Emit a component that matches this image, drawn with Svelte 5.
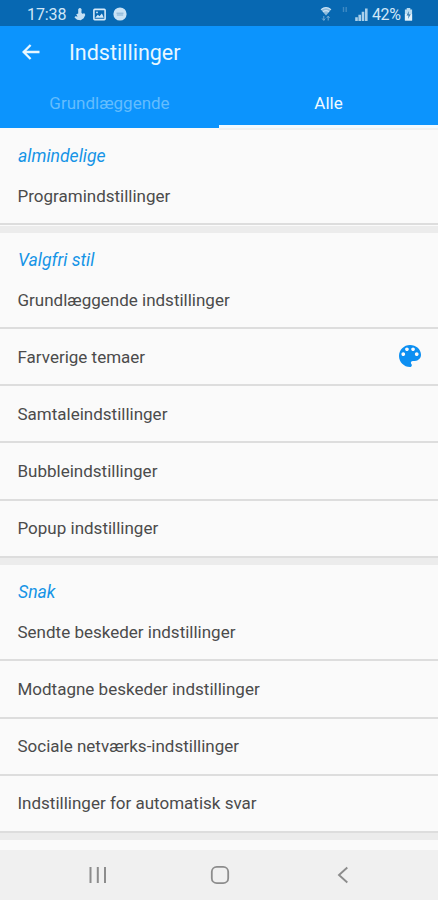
<script>
  const sections = [
    { title: 'almindelige', rows: [{ label: 'Programindstillinger' }] },
    {
      title: 'Valgfri stil',
      rows: [
        { label: 'Grundlæggende indstillinger' },
        { label: 'Farverige temaer', palette: true },
        { label: 'Samtaleindstillinger' },
        { label: 'Bubbleindstillinger' },
        { label: 'Popup indstillinger' }
      ]
    },
    {
      title: 'Snak',
      rows: [
        { label: 'Sendte beskeder indstillinger' },
        { label: 'Modtagne beskeder indstillinger' },
        { label: 'Sociale netværks-indstillinger' },
        { label: 'Indstillinger for automatisk svar' }
      ]
    }
  ];
</script>

<div class="screen">
  <div class="status">
    <span class="time">17:38</span>
    <svg class="s1" width="12" height="14" viewBox="0 0 12 14"><path d="M4.2 2.2Q6-.2 7.6 2.2L7.4 5.5l.8 1.2 2.2-.5.9 1.8-1.6 3.3-3 1.9-3.6-.5L.5 10.5l.7-1.3 2.4.3-1.4-2.3 2-.8z" fill="#c5e0f4" /></svg>
    <svg class="s2" width="13" height="13" viewBox="0 0 13 13"><rect x=".9" y="1.4" width="11.2" height="10.2" rx=".8" fill="none" stroke="#d5eafa" stroke-width="1.6" /><path d="M2.2 9.8 4.8 6.8 6.5 8.2 8.9 5.6l1.9 4.2z" fill="#d5eafa" /><circle cx="4" cy="4.4" r=".9" fill="#d5eafa" /></svg>
    <svg class="s3" width="14" height="14" viewBox="0 0 14 14"><circle cx="7" cy="7" r="6.6" fill="#c9e2f5" /><path d="M3.5 6.2h7M3.8 8h6.4" stroke="#82afd2" stroke-width="1" /></svg>
    <span class="grow"></span>
    <svg class="wifi" width="12" height="16" viewBox="0 0 12 16"><path d="M.8 3.6Q6-.8 11.2 3.6L6 9.5z" fill="#8fbbdc" /><path d="M1 3.6Q6-.4 11 3.6M3 5.7q3-2 6 0" fill="none" stroke="#c9e2f5" stroke-width="1.2" /><path d="M3.8 10v4M2.2 12.5l1.6 2 1.4-2M8.2 14.5v-4M6.8 12l1.4-2 1.4 2" fill="none" stroke="#6fa7d2" stroke-width="1" /></svg>
    <svg class="data" width="6" height="6" viewBox="0 0 6 6"><path d="M1.5 0v5M4.2 0v5" stroke="#3e89c3" stroke-width="1.4" /></svg>
    <svg class="signal" width="13" height="13" viewBox="0 0 13 13"><path d="M1.5 9.3V13M4.7 6.7V13M8 3.8V13M11.3.5V13" stroke="#a9cfea" stroke-width="2.6" /></svg>
    <span class="percent">42%</span>
    <svg class="battery" width="9" height="14" viewBox="0 0 9 14"><path d="M2.7 1h3.6v1.5h1.8v11H.9v-11h1.8z" fill="#badbf0" /><path d="M.9 7h7.2v6.5H.9z" fill="#e2f1fb" /><path d="M5 4 2.5 8.5h2L4 12l2.8-4.8H4.7z" fill="#3c7eb2" /></svg>
  </div>

  <header>
    <div class="toolbar">
      <svg width="18" height="16" viewBox="0 0 18 16"><path d="M17.5 8H1.8M8.6 1 1.6 8l7 7" fill="none" stroke="#e8f7ff" stroke-width="2.3" /></svg>
      <h1>Indstillinger</h1>
    </div>
    <nav class="tabs">
      <div class="tab">Grundlæggende</div>
      <div class="tab active">Alle</div>
    </nav>
  </header>

  <main>
    {#each sections as section}
      <section>
        <h2>{section.title}</h2>
        {#each section.rows as row}
          <div class="row">
            <span>{row.label}</span>
            {#if row.palette}
              <svg class="palette" width="22" height="22" viewBox="3 3 18 18"><path fill="#0c8ff2" d="M12 3c-4.97 0-9 4.03-9 9s4.03 9 9 9c.83 0 1.5-.67 1.5-1.5 0-.39-.15-.74-.39-1.01-.23-.26-.38-.61-.38-.99 0-.83.67-1.5 1.5-1.5H16c2.76 0 5-2.24 5-5 0-4.42-4.03-8-9-8zm-5.5 9c-.83 0-1.5-.67-1.5-1.5S5.67 9 6.5 9 8 9.67 8 10.5 7.33 12 6.5 12zm3-4C8.67 8 8 7.33 8 6.5S8.67 5 9.5 5s1.5.67 1.5 1.5S10.33 8 9.5 8zm5 0c-.83 0-1.5-.67-1.5-1.5S13.67 5 14.5 5s1.5.67 1.5 1.5S15.33 8 14.5 8zm3 4c-.83 0-1.5-.67-1.5-1.5S16.67 9 17.5 9s1.5.67 1.5 1.5-.67 1.5-1.5 1.5z" /></svg>
            {/if}
          </div>
        {/each}
      </section>
    {/each}
  </main>

  <footer>
    <svg width="18" height="18" viewBox="0 0 18 18"><path d="M1.5 1v16M8.8 1v16M16 1v16" stroke="#8c8c8c" stroke-width="2" /></svg>
    <svg class="home" width="20" height="20" viewBox="0 0 20 20"><rect x="1.8" y="1.8" width="16.4" height="16.4" rx="5" fill="none" stroke="#8c8c8c" stroke-width="1.8" /></svg>
    <svg width="12" height="18" viewBox="0 0 12 18"><path d="M10.3 1.5 2 9l8.3 7.5" fill="none" stroke="#8c8c8c" stroke-width="1.9" /></svg>
  </footer>
</div>

<style>
  :global(body) { margin: 0; }
  .screen {
    width: 438px;
    height: 900px;
    overflow: hidden;
    display: flex;
    flex-direction: column;
    background: #fafafa;
    font-family: Roboto, "Liberation Sans", sans-serif;
  }
  svg { display: block; flex: none; }
  .status {
    height: 26px;
    flex: none;
    box-sizing: border-box;
    padding: 2px 25px 0 27px;
    display: flex;
    align-items: center;
    background: #0768b2;
    color: #d0e7f8;
    font-size: 16px;
  }
  .time { width: 47px; letter-spacing: -0.1px; }
  .s2 { margin-left: 7px; }
  .s3 { margin-left: 7px; }
  .grow { flex: 1; }
  .data { margin: -8px 7px 0 10px; }
  .percent { margin-left: 4px; width: 32px; letter-spacing: -0.4px; }
  header {
    height: 102px;
    flex: none;
    display: flex;
    flex-direction: column;
    background: #0c94fd;
  }
  .toolbar {
    height: 52px;
    padding-left: 22px;
    display: flex;
    align-items: center;
    gap: 29px;
  }
  h1 {
    margin: 0;
    padding-top: 1px;
    font-size: 21.5px;
    font-weight: 400;
    color: #e8f7ff;
  }
  .tabs { flex: 1; display: flex; }
  .tab {
    flex: 1;
    box-sizing: border-box;
    border-bottom: 3px solid #0c94fd;
    display: flex;
    align-items: center;
    justify-content: center;
    font-size: 17px;
    color: #64bdfd;
    padding-top: 3px;
  }
  .tab.active {
    color: #f0faff;
    border-color: #f2faff;
    box-shadow: 0 2px 0 #f1f1f1;
  }
  main { flex: 1; min-height: 0; padding-top: 1px; }
  section { border-bottom: 7px solid #ececec; padding-bottom: 0.3px; }
  h2 {
    margin: 0;
    height: 39.3px;
    box-sizing: border-box;
    padding: 16px 0 0 18px;
    font-size: 17.6px;
    line-height: 22px;
    font-weight: 400;
    font-style: italic;
    color: #1594e6;
  }
  .row {
    height: 57.15px;
    box-sizing: border-box;
    padding: 0 17px 0 17.5px;
    display: flex;
    align-items: center;
    justify-content: space-between;
    border-bottom: 2px solid #dddddd;
    font-size: 17px;
    color: #4b4b4b;
  }
  .palette { margin-bottom: 2px; }
  footer {
    height: 50px;
    flex: none;
    box-sizing: border-box;
    padding: 0 89px;
    display: flex;
    align-items: center;
    justify-content: space-between;
    background: #f0f0f0;
  }
  .home { margin-right: 4px; }
</style>
